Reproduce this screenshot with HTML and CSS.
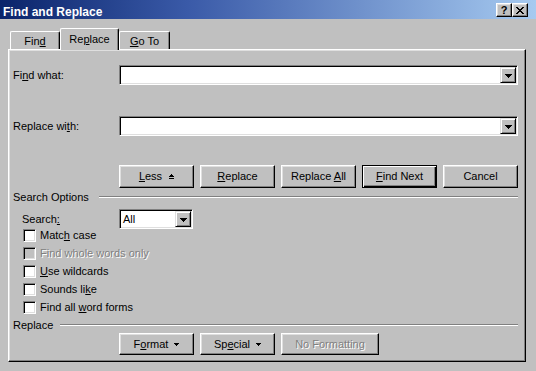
FILE: index.html
```html
<!DOCTYPE html>
<html>
<head>
<meta charset="utf-8">
<title>Find and Replace</title>
<link rel="stylesheet" href="styles.css">
</head>
<body>
<div class="window">
  <div class="titlebar">
    <span class="title">Find and Replace</span>
    <div class="tb-buttons">
      <span class="tb-btn tb-help">?</span>
      <span class="tb-btn tb-close"><svg width="8" height="7" viewBox="0 0 8 7"><path d="M0 0h2v1h1v1h2v-1h1v-1h2v1h-1v1h-1v1h-1v1h1v1h1v1h1v1h-2v-1h-1v-1h-2v1h-1v1h-2v-1h1v-1h1v-1h1v-1h-1v-1h-1v-1h-1z" fill="#000"/></svg></span>
    </div>
  </div>

  <div class="tabs">
    <div class="tab tab-find">Fin<u>d</u></div>
    <div class="tab tab-replace active">Re<u>p</u>lace</div>
    <div class="tab tab-goto"><u>G</u>o To</div>
  </div>

  <div class="panel">
    <div class="field-row row-find">
      <span class="field-label">Fi<u>n</u>d what:</span>
      <div class="combo combo-wide">
        <span class="drop-btn"><svg width="7" height="4" viewBox="0 0 7 4"><path d="M0 0h7v1h-1v1h-1v1h-1v1h-1v-1h-1v-1h-1v-1h-1z" fill="#000"/></svg></span>
      </div>
    </div>

    <div class="field-row row-replace">
      <span class="field-label">Replace wi<u>t</u>h:</span>
      <div class="combo combo-wide">
        <span class="drop-btn"><svg width="7" height="4" viewBox="0 0 7 4"><path d="M0 0h7v1h-1v1h-1v1h-1v1h-1v-1h-1v-1h-1v-1h-1z" fill="#000"/></svg></span>
      </div>
    </div>

    <div class="btn-row btn-row-top">
      <button class="btn"><span><u>L</u>ess</span><svg class="less-icon" width="5" height="5" viewBox="0 0 5 5"><path d="M2 0h1v1h1v1h1v1h-5v-1h1v-1h1z M0 4h5v1h-5z" fill="#000"/></svg></button>
      <button class="btn"><span><u>R</u>eplace</span></button>
      <button class="btn"><span>Replace <u>A</u>ll</span></button>
      <button class="btn btn-default"><span><u>F</u>ind Next</span></button>
      <button class="btn"><span>Cancel</span></button>
    </div>

    <div class="separator sep-options">
      <span class="sep-label">Search Options</span>
      <span class="sep-line"></span>
    </div>

    <div class="search-row">
      <span class="search-label">Search<u>:</u></span>
      <div class="combo combo-small">
        <span class="combo-value">All</span>
        <span class="drop-btn"><svg width="7" height="4" viewBox="0 0 7 4"><path d="M0 0h7v1h-1v1h-1v1h-1v1h-1v-1h-1v-1h-1v-1h-1z" fill="#000"/></svg></span>
      </div>
    </div>

    <div class="checks">
      <div class="check-row"><span class="cb"></span><span class="cb-label">Matc<u>h</u> case</span></div>
      <div class="check-row disabled"><span class="cb"></span><span class="cb-label">Find whole words only</span></div>
      <div class="check-row"><span class="cb"></span><span class="cb-label"><u>U</u>se wildcards</span></div>
      <div class="check-row"><span class="cb"></span><span class="cb-label">Sounds li<u>k</u>e</span></div>
      <div class="check-row"><span class="cb"></span><span class="cb-label">Find all <u>w</u>ord forms</span></div>
    </div>

    <div class="separator sep-replace">
      <span class="sep-label">Replace</span>
      <span class="sep-line"></span>
    </div>

    <div class="btn-row btn-row-bottom">
      <button class="btn"><span>F<u>o</u>rmat</span><svg class="small-arrow" width="5" height="3" viewBox="0 0 5 3"><path d="M0 0h5v1h-1v1h-1v1h-1v-1h-1v-1h-1z" fill="#000"/></svg></button>
      <button class="btn"><span>Sp<u>e</u>cial</span><svg class="small-arrow" width="5" height="3" viewBox="0 0 5 3"><path d="M0 0h5v1h-1v1h-1v1h-1v-1h-1v-1h-1z" fill="#000"/></svg></button>
      <button class="btn btn-wide btn-disabled"><span>No Formatting</span></button>
    </div>
  </div>
</div>
</body>
</html>
```

FILE: styles.css
```css
* {
  box-sizing: border-box;
}

html,
body {
  margin: 0;
  padding: 0;
}

body {
  background: #c0c0c0;
  font-family: "Liberation Sans", Arial, sans-serif;
  font-size: 11px;
  color: #000;
}

u {
  text-decoration: underline;
  text-underline-offset: 1px;
}

.window {
  width: 536px;
  height: 371px;
  background: #c0c0c0;
  overflow: hidden;
}

/* Title bar */
.titlebar {
  height: 19px;
  background: linear-gradient(to right, #0a246a 0%, #3a5aa8 35%, #a6caf0 100%);
  display: flex;
  justify-content: space-between;
  align-items: flex-start;
  padding: 0 8px 0 3px;
}

.title {
  color: #fff;
  font-weight: bold;
  font-size: 12px;
  line-height: 14px;
  margin-top: 5px;
}

.tb-buttons {
  display: flex;
  margin-top: 3px;
}

.tb-btn {
  width: 16px;
  height: 14px;
  background: #c0c0c0;
  border: 1px solid;
  border-color: #fff #000 #000 #fff;
  box-shadow: inset -1px -1px #808080, inset 1px 1px #dfdfdf;
  display: flex;
  align-items: center;
  justify-content: center;
}

.tb-help {
  font-weight: bold;
  font-size: 11px;
  line-height: 11px;
  padding-top: 1px;
}

.tb-close svg {
  display: block;
}

/* Tabs */
.tabs {
  display: flex;
  align-items: flex-end;
  height: 21px;
  margin: 9px 0 0 10px;
  position: relative;
  z-index: 1;
}

.tab {
  height: 18px;
  background: #c0c0c0;
  border-top: 1px solid #fff;
  border-left: 1px solid #fff;
  border-right: 1px solid #000;
  box-shadow: inset -1px 0 #808080;
  border-radius: 2px 2px 0 0;
  display: flex;
  align-items: center;
  justify-content: center;
}

.tab-find {
  width: 50px;
}

.tab-goto {
  width: 51px;
}

.tab.active {
  width: 59px;
  height: 22px;
  margin-bottom: -1px;
  padding-bottom: 2px;
}

/* Panel */
.panel {
  margin-left: 8px;
  width: 518px;
  height: 313px;
  border: 1px solid;
  border-color: #fff #000 #000 #fff;
  box-shadow: inset -1px -1px #808080, inset 1px 1px #dfdfdf;
  padding: 0 7px 0 4px;
}

.field-row {
  display: flex;
  align-items: center;
  height: 20px;
}

.row-find {
  margin-top: 15px;
}

.row-replace {
  margin-top: 31px;
}

.field-label {
  width: 106px;
  flex: none;
}

/* Combo box */
.combo {
  height: 20px;
  background: #fff;
  border: 1px solid;
  border-color: #808080 #fff #fff #808080;
  box-shadow: inset 1px 1px #000, inset -1px -1px #dfdfdf;
  padding: 1px;
  display: flex;
  align-items: center;
  justify-content: flex-end;
}

.combo-wide {
  width: 399px;
}

.combo-small {
  width: 74px;
  justify-content: space-between;
}

.combo-value {
  padding-left: 2px;
}

.drop-btn {
  width: 16px;
  height: 16px;
  background: #c0c0c0;
  border: 1px solid;
  border-color: #dfdfdf #000 #000 #dfdfdf;
  box-shadow: inset 1px 1px #fff, inset -1px -1px #808080;
  display: flex;
  align-items: center;
  justify-content: center;
  padding-top: 1px;
}

.drop-btn svg {
  display: block;
}

/* Buttons */
.btn-row {
  display: flex;
  gap: 6px;
  padding-left: 106px;
}

.btn-row-top {
  margin-top: 29px;
}

.btn-row-top .btn {
  height: 23px;
}

.btn-row-bottom {
  margin-top: 2px;
}

.btn {
  width: 75px;
  height: 22px;
  padding: 0;
  margin: 0;
  background: #c0c0c0;
  border: 1px solid;
  border-color: #fff #000 #000 #fff;
  box-shadow: inset -1px -1px #808080, inset 1px 1px #dfdfdf;
  font-family: inherit;
  font-size: 11px;
  color: #000;
  display: flex;
  align-items: center;
  justify-content: center;
  line-height: 13px;
}

.btn-default {
  border-color: #000;
  box-shadow: inset 1px 1px #fff, inset -1px -1px #000, inset -2px -2px #808080;
}

.btn-wide {
  width: 98px;
}

.btn-disabled {
  color: #808080;
  text-shadow: 1px 1px 0 #fff;
}

.less-icon {
  margin-left: 7px;
  display: block;
}

.small-arrow {
  margin-left: 6px;
  display: block;
}

/* Separators */
.separator {
  display: flex;
  align-items: center;
}

.sep-options {
  height: 14px;
  margin-top: 2px;
}

.sep-replace {
  height: 12px;
}

.sep-line {
  flex: 1;
  height: 2px;
  border-top: 1px solid #808080;
  border-bottom: 1px solid #fff;
}

.sep-options .sep-line {
  margin-left: 10px;
}

.sep-replace .sep-line {
  margin-left: 7px;
}

/* Search row */
.search-row {
  display: flex;
  align-items: center;
  height: 20px;
  margin-top: 5px;
  padding-left: 9px;
}

.search-label {
  width: 97px;
  flex: none;
}

/* Checkboxes */
.checks {
  padding-left: 10px;
}

.check-row {
  display: flex;
  align-items: flex-start;
  height: 18px;
}

.cb {
  width: 13px;
  height: 13px;
  flex: none;
  background: #fff;
  border: 1px solid;
  border-color: #808080 #fff #fff #808080;
  box-shadow: inset 1px 1px #000, inset -1px -1px #dfdfdf;
}

.cb-label {
  margin-left: 4px;
  line-height: 13px;
}

.check-row.disabled .cb {
  background: #c0c0c0;
}

.check-row.disabled .cb-label {
  color: #808080;
  text-shadow: 1px 1px 0 #fff;
}
```
